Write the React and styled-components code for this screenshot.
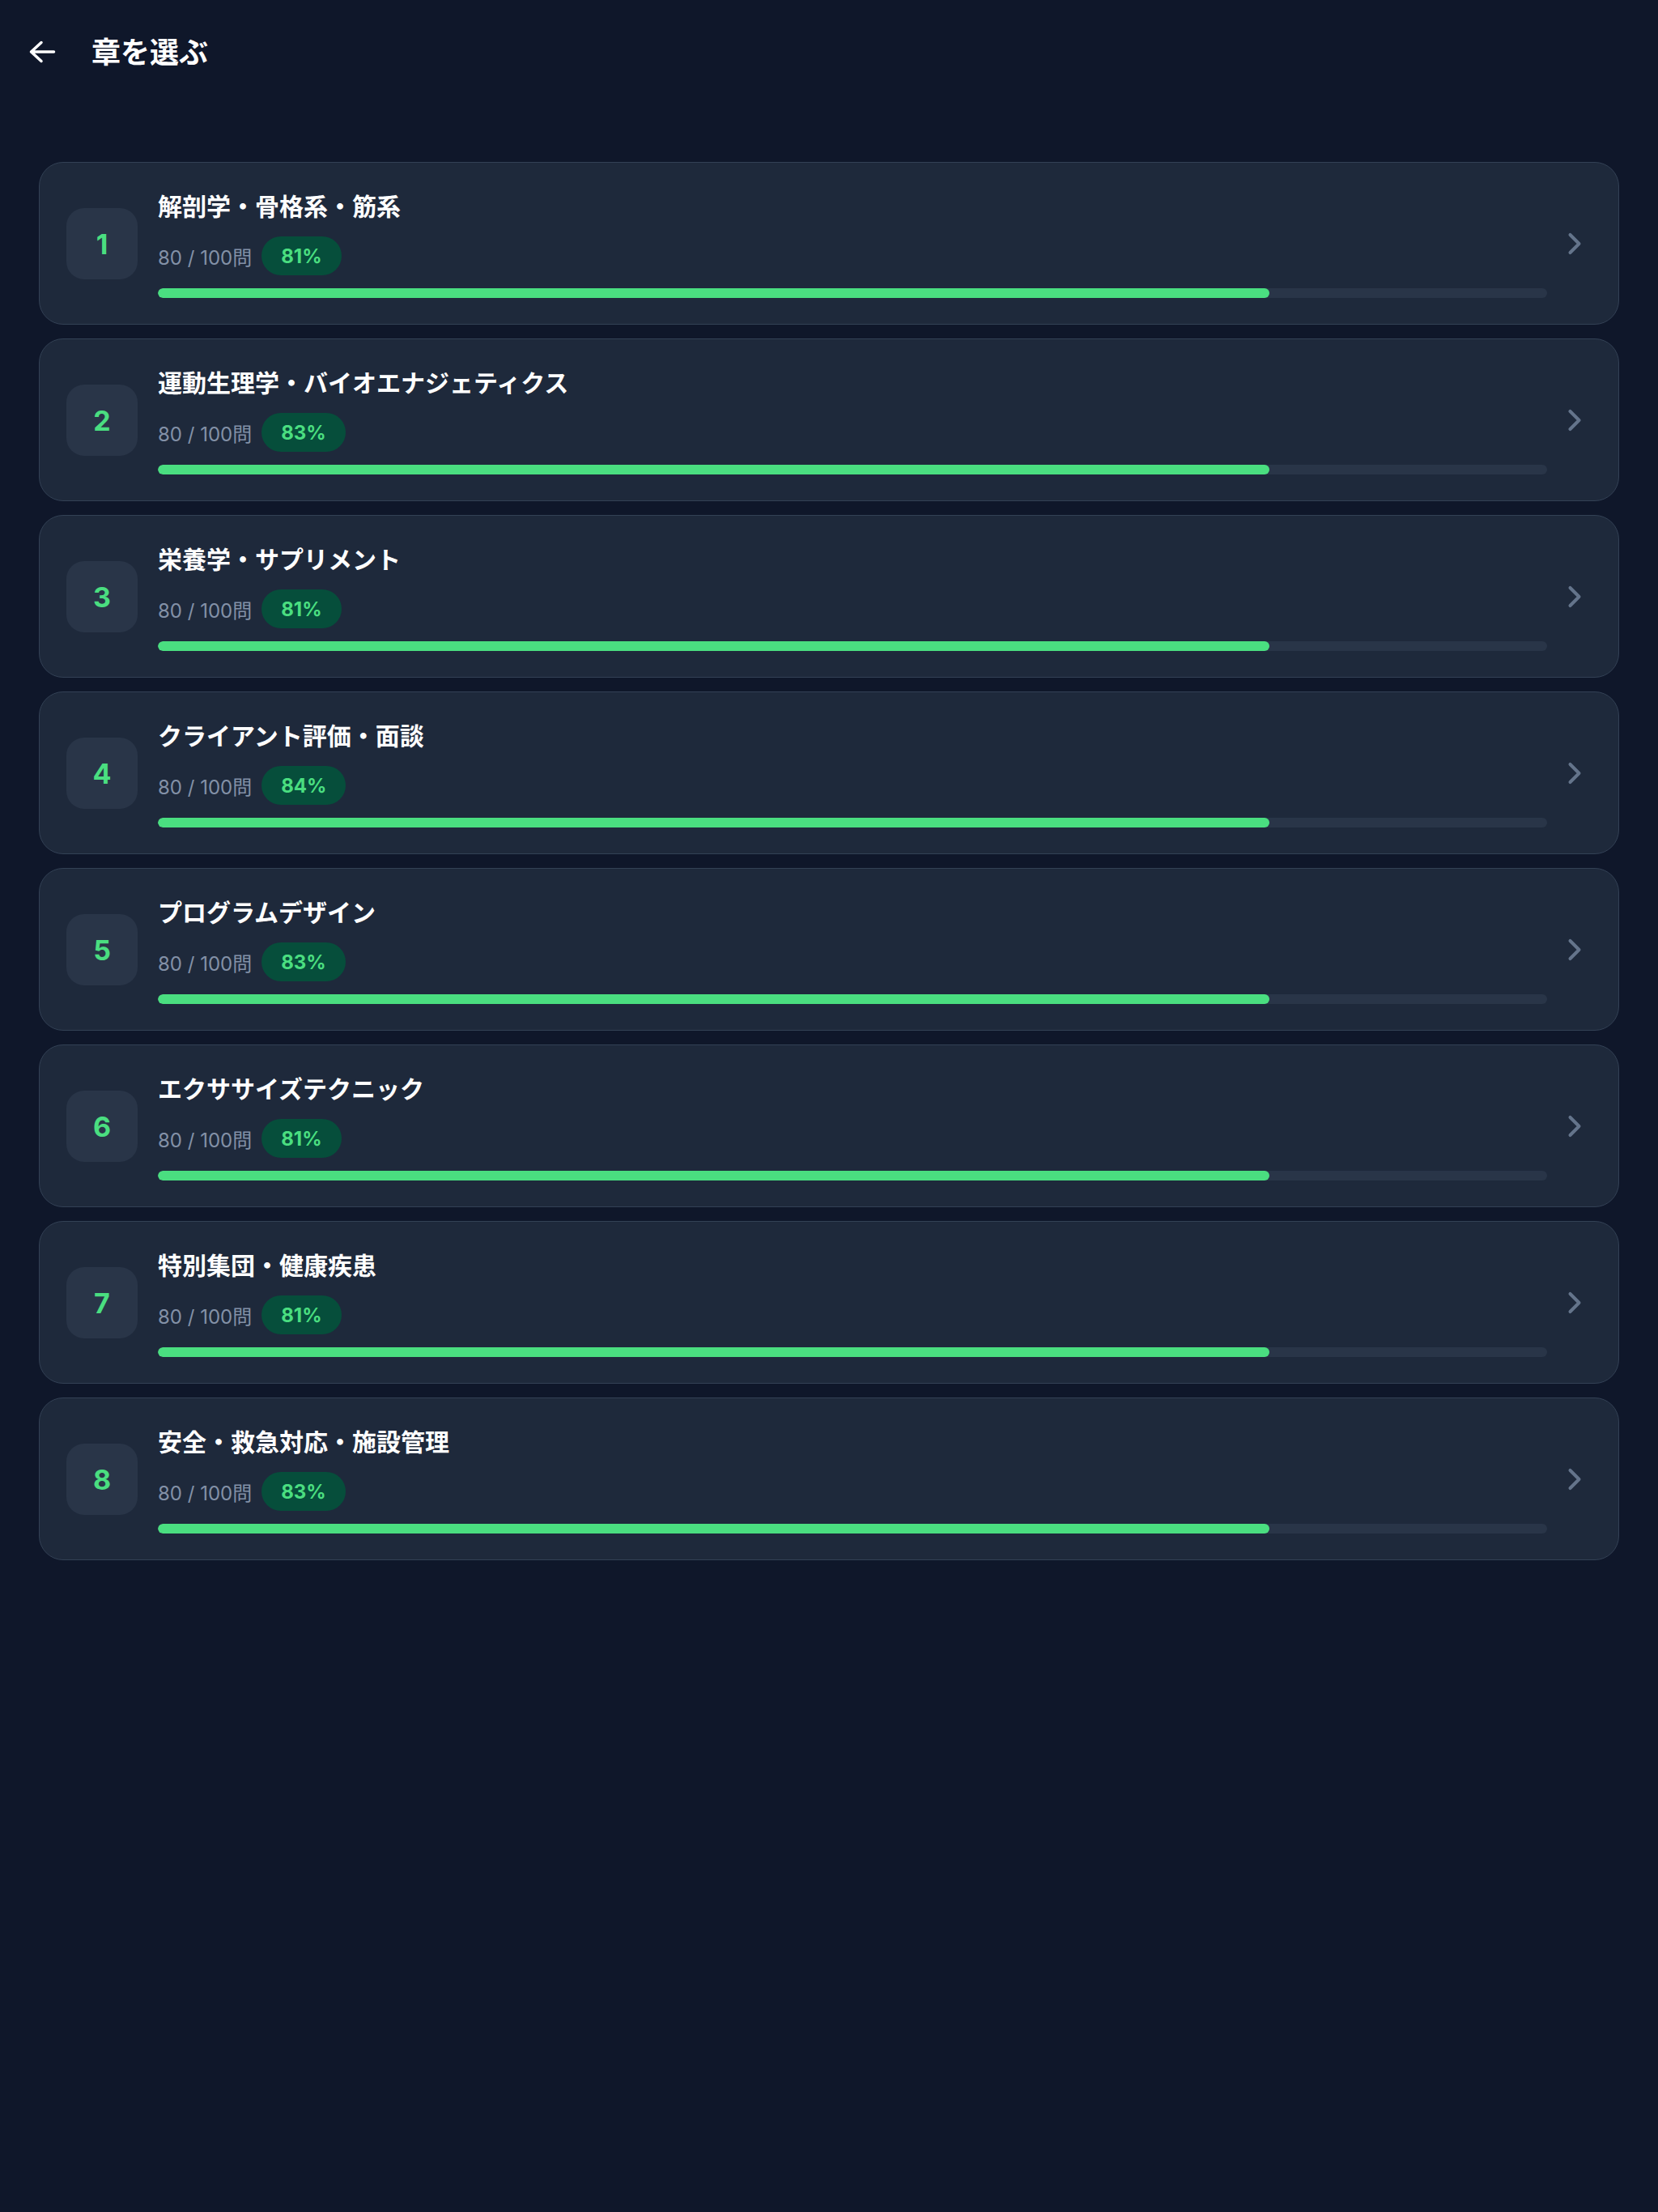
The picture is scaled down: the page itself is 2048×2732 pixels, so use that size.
import React from "react";
import styled, { createGlobalStyle } from "styled-components";

const GlobalStyle = createGlobalStyle`
  html, body {
    margin: 0;
    padding: 0;
    background: #0f172a;
  }
  body {
    min-height: 2732px;
    font-family: Inter, "Noto Sans CJK JP", sans-serif;
    color: #ffffff;
  }
  * { box-sizing: border-box; }
`;

const Page = styled.div`
  min-height: 2732px;
  background: #0f172a;
`;

const Header = styled.header`
  height: 124px;
  display: flex;
  align-items: center;
  padding-left: 28px;
  gap: 37px;
`;

const BackButton = styled.button`
  width: 48px;
  height: 48px;
  padding: 0;
  border: none;
  background: transparent;
  display: flex;
  align-items: center;
  justify-content: center;
  color: #ffffff;
  margin-top: 3px;
`;

const HeaderTitle = styled.h1`
  margin: 0;
  font-size: 36px;
  font-weight: 700;
  color: #ffffff;
  letter-spacing: 0;
  font-family: Inter, "Noto Sans CJK JP", sans-serif;
`;

const List = styled.div`
  display: flex;
  flex-direction: column;
  gap: 17px;
  padding: 76px 48px 0;
`;

const Card = styled.div`
  display: flex;
  align-items: center;
  background: #1e293b;
  border: 1px solid #334155;
  border-radius: 30px;
  padding: 33px 32px 32px 33px;
  gap: 25px;
`;

const NumberBox = styled.div`
  flex: none;
  width: 88px;
  height: 88px;
  border-radius: 22px;
  background: #293548;
  display: flex;
  align-items: center;
  justify-content: center;
  color: #4ade80;
  font-weight: 700;
  font-size: 34px;
  font-family: Inter, sans-serif;
`;

const Content = styled.div`
  flex: 1;
  display: flex;
  flex-direction: column;
  gap: 16px;
  min-width: 0;
`;

const Title = styled.div`
  font-size: 30px;
  line-height: 42px;
  font-weight: 700;
  color: #ffffff;
`;

const Meta = styled.div`
  display: flex;
  align-items: center;
  gap: 12px;
  height: 48px;
`;

const Count = styled.span`
  font-size: 24px;
  color: #8391a7;
  font-family: Inter, "Noto Sans CJK JP", sans-serif;
`;

const Badge = styled.span`
  height: 48px;
  padding: 0 24px;
  border-radius: 24px;
  background: #064e3b;
  color: #4ade80;
  font-size: 24px;
  font-weight: 700;
  display: inline-flex;
  align-items: center;
`;

const Track = styled.div`
  height: 12px;
  border-radius: 6px;
  background: #293548;
  overflow: hidden;
`;

const Fill = styled.div`
  height: 100%;
  border-radius: 6px;
  background: #4ade80;
`;

const Chevron = styled.div`
  flex: none;
  width: 44px;
  height: 44px;
  margin-left: -13px;
  color: #64748b;
  display: flex;
`;

const chapters = [
  { title: "解剖学・骨格系・筋系", pct: 81 },
  { title: "運動生理学・バイオエナジェティクス", pct: 83 },
  { title: "栄養学・サプリメント", pct: 81 },
  { title: "クライアント評価・面談", pct: 84 },
  { title: "プログラムデザイン", pct: 83 },
  { title: "エクササイズテクニック", pct: 81 },
  { title: "特別集団・健康疾患", pct: 81 },
  { title: "安全・救急対応・施設管理", pct: 83 },
];

export default function App() {
  return (
    <Page>
      <GlobalStyle />
      <Header>
        <BackButton aria-label="戻る">
          <svg width="48" height="48" viewBox="0 0 48 48" fill="none">
            <path
              d="M38.5 24H10.5M23 12.5L10.5 24L23 35.5"
              stroke="currentColor"
              strokeWidth="3.5"
              strokeLinecap="round"
              strokeLinejoin="round"
            />
          </svg>
        </BackButton>
        <HeaderTitle>章を選ぶ</HeaderTitle>
      </Header>
      <List>
        {chapters.map((c, i) => (
          <Card key={i}>
            <NumberBox>{i + 1}</NumberBox>
            <Content>
              <Title>{c.title}</Title>
              <Meta>
                <Count>80 / 100問</Count>
                <Badge>{c.pct}%</Badge>
              </Meta>
              <Track>
                <Fill style={{ width: "80%" }} />
              </Track>
            </Content>
            <Chevron>
              <svg width="44" height="44" viewBox="0 0 24 24" fill="none">
                <path
                  d="M9 6l6 6-6 6"
                  stroke="currentColor"
                  strokeWidth="2.2"
                  strokeLinecap="round"
                  strokeLinejoin="round"
                />
              </svg>
            </Chevron>
          </Card>
        ))}
      </List>
    </Page>
  );
}
